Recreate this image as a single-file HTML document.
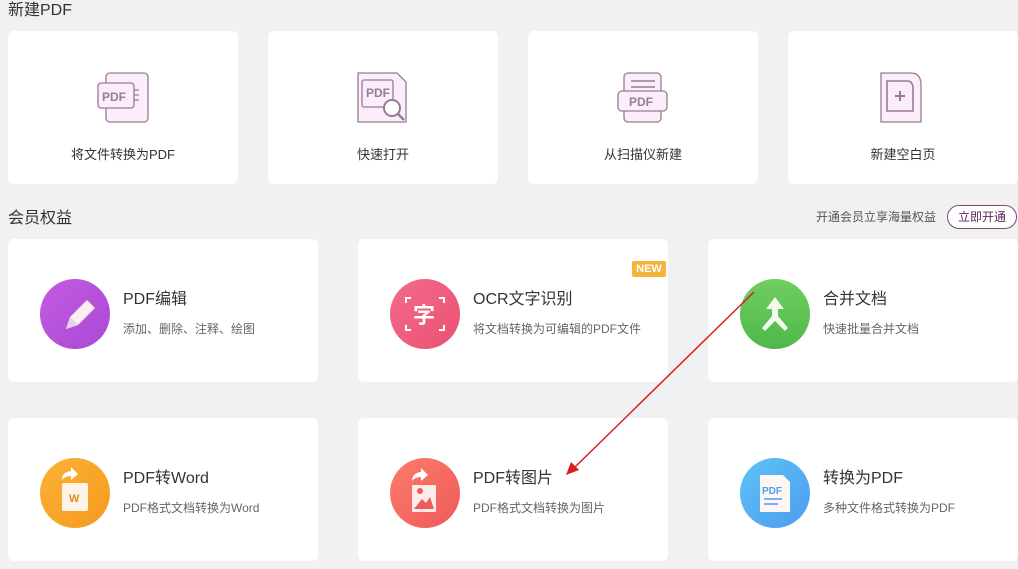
<!DOCTYPE html>
<html><head><meta charset="utf-8"><style>
*{margin:0;padding:0;box-sizing:border-box}
body{width:1018px;height:569px;background:#f1f1f1;font-family:"Liberation Sans","Noto Sans CJK SC",sans-serif;position:relative;overflow:hidden;color:#333}
.h{position:absolute;font-size:16px;color:#333}
.c{position:absolute;background:#fff;border-radius:6px}
.tc{width:230px;height:153px;top:31px}
.tc svg{position:absolute;left:89px;top:40px}
.tc span{position:absolute;top:113px;width:100%;text-align:center;font-size:13px;color:#333}
.m{width:310px;height:143px}
.ci{position:absolute;left:32px;top:40px;width:70px;height:70px;border-radius:50%}
.t{position:absolute;left:115px;top:46px;font-size:16px;color:#333}
.s{position:absolute;left:115px;top:81px;font-size:12px;color:#666}
</style></head><body>
<div class="h" style="left:8px;top:-4px">新建PDF</div>

<div class="c tc" style="left:8px">
<svg width="60" height="60" viewBox="0 0 60 60" fill="#fbeefb" stroke="#9a7a95" stroke-width="1.3">
<rect x="9" y="2" width="42" height="49" rx="4"/><rect x="1" y="12" width="36" height="25" rx="3"/>
<text x="5" y="30" font-family="Liberation Sans" font-weight="bold" font-size="12" fill="#9a7a95" stroke="none">PDF</text>
<path d="M37 19h5M37 24h5M37 29h5" fill="none"/></svg>
<span>将文件转换为PDF</span></div>

<div class="c tc" style="left:268px">
<svg width="60" height="60" viewBox="0 0 60 60" fill="#fbeefb" stroke="#9a7a95" stroke-width="1.3">
<path d="M1 2h39l9 9v40H1z"/><rect x="5" y="9" width="31" height="27" rx="2"/>
<text x="9" y="26" font-family="Liberation Sans" font-weight="bold" font-size="12" fill="#9a7a95" stroke="none">PDF</text>
<circle cx="35" cy="37" r="8" fill="#fff" stroke-width="2"/><path d="M41 43l6 6" stroke-width="2.5"/></svg>
<span>快速打开</span></div>

<div class="c tc" style="left:528px">
<svg width="60" height="60" viewBox="0 0 60 60" fill="#fbeefb" stroke="#9a7a95" stroke-width="1.3">
<rect x="7" y="2" width="37" height="49" rx="4"/><path d="M14 10h24M14 16h24" fill="none" stroke-width="1.6"/>
<rect x="1" y="20" width="49" height="20" rx="4"/>
<text x="12" y="35" font-family="Liberation Sans" font-weight="bold" font-size="12" fill="#9a7a95" stroke="none">PDF</text></svg>
<span>从扫描仪新建</span></div>

<div class="c tc" style="left:788px">
<svg width="60" height="60" viewBox="0 0 60 60" fill="#fbeefb" stroke="#9a7a95" stroke-width="1.3">
<path d="M4 2h30q10 0 10 12v37H4z"/><path d="M10 10h20q6 0 6 8v22H10z" fill="none" stroke-width="1.6"/>
<path d="M23 20v10M18 25h10" stroke-width="2"/></svg>
<span>新建空白页</span></div>

<div class="h" style="left:8px;top:204px">会员权益</div>
<div style="position:absolute;left:816px;top:208px;font-size:12px;color:#555">开通会员立享海量权益</div>
<div style="position:absolute;left:947px;top:205px;width:70px;height:24px;border:1px solid #7a4a7a;border-radius:12px;font-size:12px;color:#5a2a5a;text-align:center;line-height:22px;background:#fff">立即开通</div>

<div class="c m" style="left:8px;top:239px">
<div class="ci" style="background:linear-gradient(135deg,#c45ce0,#a949d6)"></div>
<svg style="position:absolute;left:32px;top:40px" width="70" height="70"><path d="M26 50l4-12 17-17 8 8-17 17z" fill="#fbeef0"/><path d="M26 50l4-12 8 8z" fill="#e8d0ea"/></svg>
<div class="t">PDF编辑</div><div class="s">添加、删除、注释、绘图</div></div>

<div class="c m" style="left:358px;top:239px">
<div class="ci" style="background:linear-gradient(135deg,#f46a8a,#e95272)"></div>
<svg style="position:absolute;left:32px;top:40px" width="70" height="70" fill="none" stroke="#fff" stroke-width="2"><path d="M16 24v-5h5M54 24v-5h-5M16 46v5h5M54 46v5h-5"/><text x="23" y="44" font-family="Noto Sans CJK SC" font-weight="bold" font-size="22" fill="#fff" stroke="none">字</text></svg>
<div class="t">OCR文字识别</div><div class="s">将文档转换为可编辑的PDF文件</div>
<div style="position:absolute;left:274px;top:22px;width:34px;height:16px;background:#f5b43a;color:#fff;font-size:11px;font-weight:bold;text-align:center;line-height:16px;border-radius:2px">NEW</div></div>

<div class="c m" style="left:708px;top:239px">
<div class="ci" style="background:linear-gradient(180deg,#6fcf5f,#4fb74a)"></div>
<svg style="position:absolute;left:32px;top:40px" width="70" height="70"><path d="M35 18l-9 12h6v7l-10 12 3 3 10-10 10 10 3-3-10-12v-7h6z" fill="#f4faef"/></svg>
<div class="t">合并文档</div><div class="s">快速批量合并文档</div></div>

<div class="c m" style="left:8px;top:418px">
<div class="ci" style="background:linear-gradient(135deg,#fbb236,#f59a1f)"></div>
<svg style="position:absolute;left:32px;top:40px" width="70" height="70"><rect x="22" y="25" width="26" height="28" rx="2" fill="#fdf3e6"/><text x="29" y="44" font-family="Liberation Sans" font-weight="bold" font-size="11" fill="#e38a1a">W</text><path d="M22 22q0-8 9-9v-4l7 7-7 6v-4q-6 0-9 4z" fill="#fff"/></svg>
<div class="t">PDF转Word</div><div class="s">PDF格式文档转换为Word</div></div>

<div class="c m" style="left:358px;top:418px">
<div class="ci" style="background:linear-gradient(135deg,#fb7c6a,#ef5a5a)"></div>
<svg style="position:absolute;left:32px;top:40px" width="70" height="70"><rect x="22" y="27" width="24" height="27" fill="#fdeaea"/><circle cx="30" cy="33" r="3" fill="#ef5a5a"/><path d="M24 51l8-10 4 4 4-6 4 12z" fill="#ef5a5a"/><path d="M22 23q0-8 9-9v-4l7 7-7 6v-4q-6 0-9 4z" fill="#fff"/></svg>
<div class="t">PDF转图片</div><div class="s">PDF格式文档转换为图片</div></div>

<div class="c m" style="left:708px;top:418px">
<div class="ci" style="background:linear-gradient(135deg,#5cc3f5,#4e9cf0)"></div>
<svg style="position:absolute;left:32px;top:40px" width="70" height="70"><path d="M20 17h23l7 7v30H20z" fill="#fdf6f4"/><text x="22" y="36" font-family="Liberation Sans" font-weight="bold" font-size="10" fill="#4e9cf0">PDF</text><path d="M24 41h18M24 46h14" stroke="#4e9cf0" stroke-width="1.5"/></svg>
<div class="t">转换为PDF</div><div class="s">多种文件格式转换为PDF</div></div>

<svg style="position:absolute;left:0;top:0" width="1018" height="569"><path d="M754 292L575 467" stroke="#d81e1e" stroke-width="1.5"/><path d="M566 475l5-13 8 8z" fill="#d81e1e"/></svg>
</body></html>
